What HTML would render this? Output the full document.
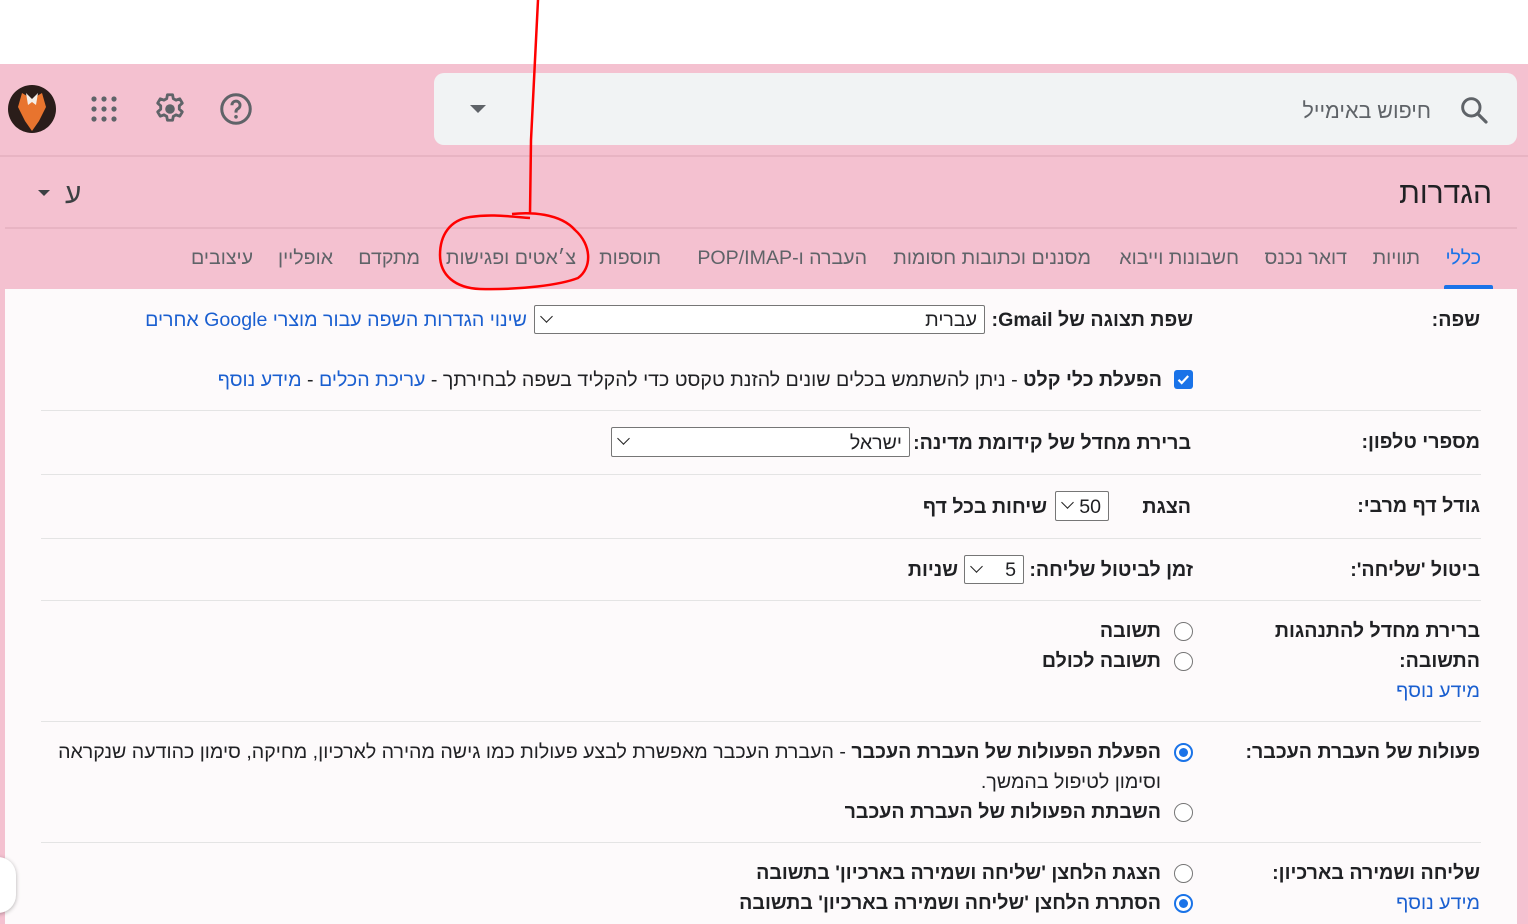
<!DOCTYPE html>
<html><head><meta charset="utf-8"><style>
*{margin:0;padding:0;box-sizing:border-box}
body{width:1528px;height:924px;overflow:hidden;background:#fff;font-family:"Liberation Sans","Noto Sans CJK SC",sans-serif;color:#202124;position:relative}
.a{position:absolute;white-space:nowrap;direction:rtl;font-size:19.6px;line-height:22px}
.b{font-weight:bold}
.l{color:#1a5fd0}
.tab{position:absolute;top:247px;white-space:nowrap;direction:rtl;font-size:19.6px;color:#5f6368}
.sep{position:absolute;left:41px;width:1440px;height:1px;background:#e4e4e4}
.sel{position:absolute;border:1px solid #767676;border-radius:2px;background:#fff}
.chev{position:absolute;left:7px;top:6px;width:9px;height:9px;border-right:1.6px solid #222;border-bottom:1.6px solid #222;transform:rotate(45deg)}
.rad{position:absolute;width:19px;height:19px;border:1.5px solid #767676;border-radius:50%;background:#fff}
.rad.on{border:2px solid #1a73e8}
.rad.on::after{content:"";position:absolute;left:3px;top:3px;width:9px;height:9px;border-radius:50%;background:#1a73e8}
</style></head><body>
<div style="position:absolute;left:0;top:64px;width:1528px;height:860px;background:#f4c1d0"></div>
<div style="position:absolute;left:0;top:155px;width:1528px;height:2px;background:#e8b4c3"></div>
<div style="position:absolute;left:5px;top:227px;width:1512px;height:2px;background:#e8b4c3"></div>
<div style="position:absolute;left:434px;top:73px;width:1083px;height:72px;background:#f1f3f4;border-radius:10px"></div>
<svg style="position:absolute;left:1458px;top:94px" width="32" height="32" viewBox="0 0 24 24"><circle cx="10" cy="10" r="6.5" fill="none" stroke="#5f6368" stroke-width="2.2"/><path d="M14.8 14.8L21 21" stroke="#5f6368" stroke-width="2.4" stroke-linecap="round"/></svg>
<div class="a" style="right:97px;top:98px;font-size:21.5px;color:#5f6368;line-height:26px">חיפוש באימייל</div>
<div style="position:absolute;left:470px;top:105px;width:0;height:0;border-left:8px solid transparent;border-right:8px solid transparent;border-top:8px solid #5f6368"></div>
<svg style="position:absolute;left:218px;top:91px" width="36" height="36" viewBox="0 0 24 24"><circle cx="12" cy="12" r="9.5" fill="none" stroke="#5f6368" stroke-width="2"/><path d="M9.3 9.5a2.7 2.7 0 1 1 4 2.3c-.9.5-1.3 1-1.3 2v.6" fill="none" stroke="#5f6368" stroke-width="2"/><circle cx="12" cy="17.2" r="1.2" fill="#5f6368"/></svg>
<svg style="position:absolute;left:152px;top:91px" width="36" height="36" viewBox="0 0 24 24"><path d="M10.3 2.5h3.4l.5 2.6 1.8 1 2.5-.9 1.7 2.9-2 1.8v2.2l2 1.8-1.7 2.9-2.5-.9-1.8 1-.5 2.6h-3.4l-.5-2.6-1.8-1-2.5.9-1.7-2.9 2-1.8v-2.2l-2-1.8 1.7-2.9 2.5.9 1.800-1z" fill="none" stroke="#5f6368" stroke-width="1.9" stroke-linejoin="round"/><circle cx="12" cy="12" r="3.2" fill="#5f6368"/></svg>
<svg style="position:absolute;left:90px;top:95px" width="28" height="28" viewBox="0 0 28 28" fill="#5f6368"><circle cx="4" cy="4" r="2.6"/><circle cx="14" cy="4" r="2.6"/><circle cx="24" cy="4" r="2.6"/><circle cx="4" cy="14" r="2.6"/><circle cx="14" cy="14" r="2.6"/><circle cx="24" cy="14" r="2.6"/><circle cx="4" cy="24" r="2.6"/><circle cx="14" cy="24" r="2.6"/><circle cx="24" cy="24" r="2.6"/></svg>
<svg style="position:absolute;left:8px;top:85px" width="48" height="48" viewBox="0 0 48 48"><circle cx="24" cy="24" r="24" fill="#2a1d1a"/><path d="M14 8l10 6 10-6 4 14-7 14-7 10-7-10-7-14z" fill="#e8742e"/><path d="M18 8l6 6 6-6-2 12-4-3-4 3z" fill="#f4eee8"/></svg>
<div class="a" style="right:36px;top:176px;font-size:30px;line-height:36px">הגדרות</div>
<div class="a" style="left:65px;top:178px;font-size:28px;line-height:32px;color:#3c4043">ע</div>
<div style="position:absolute;left:38px;top:190px;width:0;height:0;border-left:6px solid transparent;border-right:6px solid transparent;border-top:6px solid #3c4043"></div>
<div class="tab" style="right:47px;color:#1a73e8">כללי</div>
<div class="tab" style="right:108px">תוויות</div>
<div class="tab" style="right:181px">דואר נכנס</div>
<div class="tab" style="right:289px">חשבונות וייבוא</div>
<div class="tab" style="right:437px">מסננים וכתובות חסומות</div>
<div class="tab" style="right:661px">העברה ו-POP/IMAP</div>
<div class="tab" style="right:867px">תוספות</div>
<div class="tab" style="right:952px">צ׳אטים ופגישות</div>
<div class="tab" style="right:1108px">מתקדם</div>
<div class="tab" style="right:1195px">אופליין</div>
<div class="tab" style="right:1275px">עיצובים</div>
<div style="position:absolute;left:1444px;top:285px;width:49px;height:4px;background:#1a73e8;border-radius:2px 2px 0 0"></div>
<div style="position:absolute;left:5px;top:289px;width:1512px;height:635px;background:#fdfafb"></div>

<div class="a b" style="right:48px;top:309px">שפה:</div>
<div class="a b" style="right:335px;top:309px">שפת תצוגה של Gmail:</div>
<div class="sel" style="left:534px;top:305px;width:451px;height:29px"><div class="chev"></div><div class="a" style="right:7px;top:3px">עברית</div></div>
<div class="a l" style="right:1001px;top:309px">שינוי הגדרות השפה עבור מוצרי Google אחרים</div>
<div style="position:absolute;left:1174px;top:370px;width:19px;height:19px;background:#1a73e8;border-radius:3px"><svg width="19" height="19" viewBox="0 0 19 19"><path d="M4.5 9.8l3.2 3.2 6.5-7" fill="none" stroke="#fff" stroke-width="2.2"/></svg></div>
<div class="a" style="right:366px;top:369px"><b>הפעלת כלי קלט</b> - ניתן להשתמש בכלים שונים להזנת טקסט כדי להקליד בשפה לבחירתך - <span class="l">עריכת הכלים</span> - <span class="l">מידע נוסף</span></div>
<div class="sep" style="top:410px"></div>

<div class="a b" style="right:48px;top:431px">מספרי טלפון:</div>
<div class="a b" style="right:337px;top:432px">ברירת מחדל של קידומת מדינה:</div>
<div class="sel" style="left:611px;top:427px;width:299px;height:30px"><div class="chev"></div><div class="a" style="right:7px;top:4px">ישראל</div></div>
<div class="sep" style="top:474px"></div>

<div class="a b" style="right:48px;top:495px">גודל דף מרבי:</div>
<div class="a b" style="right:337px;top:496px">הצגת</div>
<div class="sel" style="left:1055px;top:491px;width:54px;height:30px"><div class="chev"></div><div class="a" style="right:7px;top:4px">50</div></div>
<div class="a b" style="right:481px;top:496px">שיחות בכל דף</div>
<div class="sep" style="top:538px"></div>

<div class="a b" style="right:48px;top:559px">ביטול 'שליחה':</div>
<div class="a b" style="right:335px;top:559px">זמן לביטול שליחה:</div>
<div class="sel" style="left:964px;top:555px;width:60px;height:29px"><div class="chev"></div><div class="a" style="right:7px;top:3px">5</div></div>
<div class="a b" style="right:570px;top:559px">שניות</div>
<div class="sep" style="top:600px"></div>

<div class="a b" style="right:48px;top:620px">ברירת מחדל להתנהגות</div>
<div class="a b" style="right:48px;top:650px">התשובה:</div>
<div class="a l" style="right:48px;top:680px">מידע נוסף</div>
<div class="rad" style="left:1174px;top:622px"></div>
<div class="a b" style="right:367px;top:620px">תשובה</div>
<div class="rad" style="left:1174px;top:652px"></div>
<div class="a b" style="right:367px;top:650px">תשובה לכולם</div>
<div class="sep" style="top:721px"></div>

<div class="a b" style="right:48px;top:741px">פעולות של העברת העכבר:</div>
<div class="rad on" style="left:1174px;top:743px"></div>
<div class="a" style="right:367px;top:741px"><b>הפעלת הפעולות של העברת העכבר</b> - העברת העכבר מאפשרת לבצע פעולות כמו גישה מהירה לארכיון, מחיקה, סימון כהודעה שנקראה</div>
<div class="a" style="right:367px;top:771px">וסימון לטיפול בהמשך.</div>
<div class="rad" style="left:1174px;top:803px"></div>
<div class="a b" style="right:367px;top:801px">השבתת הפעולות של העברת העכבר</div>
<div class="sep" style="top:842px"></div>

<div class="a b" style="right:48px;top:862px">שליחה ושמירה בארכיון:</div>
<div class="a l" style="right:48px;top:892px">מידע נוסף</div>
<div class="rad" style="left:1174px;top:864px"></div>
<div class="a b" style="right:367px;top:862px">הצגת הלחצן 'שליחה ושמירה בארכיון' בתשובה</div>
<div class="rad on" style="left:1174px;top:894px"></div>
<div class="a b" style="right:367px;top:892px">הסתרת הלחצן 'שליחה ושמירה בארכיון' בתשובה</div>

<div style="position:absolute;left:-20px;top:857px;width:36px;height:56px;border-radius:28px;background:#fff;box-shadow:0 1px 4px rgba(0,0,0,.3)"></div>

<svg style="position:absolute;left:0;top:0" width="1528" height="924"><path d="M538 0L535 60 531 140 530 214 M512 214C530 212 560 213 575 230 592 245 592 268 578 278 560 285 520 290 480 289 455 288 440 275 440 255 440 235 450 220 470 217 490 214 505 216 530 218" fill="none" stroke="#f00" stroke-width="2.5"/></svg>
</body></html>
